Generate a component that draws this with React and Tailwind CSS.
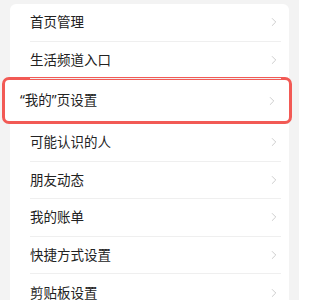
import { ChevronRight } from 'lucide-react';

const TOP = ['首页管理', '生活频道入口'];
const REST = ['可能认识的人', '朋友动态', '我的账单', '快捷方式设置', '剪贴板设置'];

function Row({ label, last }) {
  return (
    <div className="flex h-[37.5px] items-center pl-[20px] pr-[8px]">
      <div
        className={`flex h-full flex-1 items-center justify-between ${
          last ? '' : 'border-b border-[#efefef]'
        }`}
      >
        <span className="text-[13.5px] text-[#222]">{label}</span>
        <ChevronRight size={14} strokeWidth={1.2} className="text-[#b8b8b8]" />
      </div>
    </div>
  );
}

export default function App() {
  return (
    <div
      className="h-[300px] w-[299px] overflow-hidden bg-[#f3f3f3] pt-[4px]"
      style={{ fontFamily: '"Noto Sans", "Noto Sans CJK SC", sans-serif' }}
    >
      <div className="ml-[10px] w-[279px] rounded-t-[6px] bg-white">
        {TOP.map((t) => (
          <Row key={t} label={t} />
        ))}
      </div>

      {/* 高亮的那一行 */}
      <div className="-mt-[2px] ml-[2px] w-[290px] rounded-[7px] border-[3px] border-[#f25a55] bg-white">
        <div className="flex h-[41px] items-center justify-between pl-[15px] pr-[10px]">
          <span className="text-[13.5px] text-[#222]">“我的”页设置</span>
          <ChevronRight size={14} strokeWidth={1.2} className="text-[#b8b8b8]" />
        </div>
      </div>

      <div className="ml-[10px] w-[279px] bg-white">
        {REST.map((t, i) => (
          <Row key={t} label={t} last={i === REST.length - 1} />
        ))}
      </div>
    </div>
  );
}
